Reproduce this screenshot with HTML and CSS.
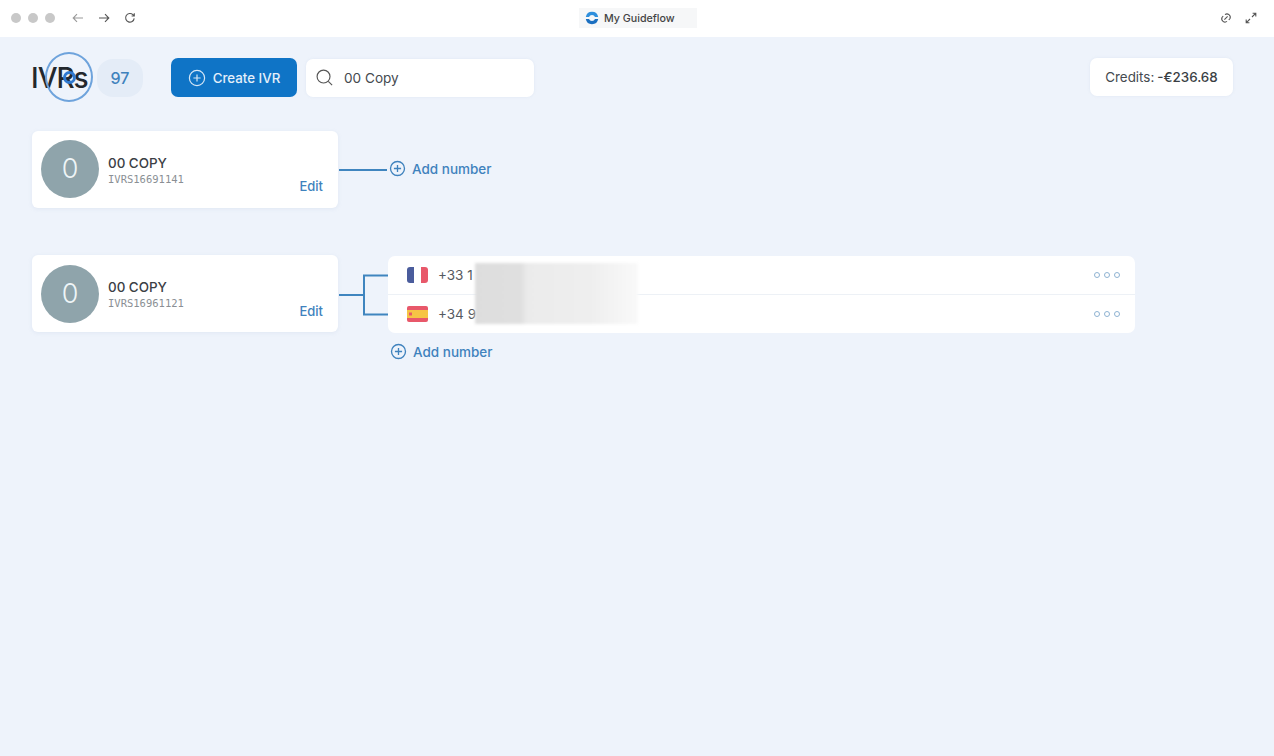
FILE: index.html
```html
<!DOCTYPE html>
<html lang="en">
<head>
  <meta charset="UTF-8">
  <title>My Guideflow</title>
  <link rel="stylesheet" href="styles.css">
</head>
<body>
  <!-- browser bar -->
  <div class="topbar">
    <div class="topbar-left">
      <span class="dot"></span><span class="dot"></span><span class="dot"></span>
      <svg class="nav-icon first" viewBox="0 0 12 12"><path d="M11 6H1.5M5 2.2 1.2 6 5 9.8" class="light"/></svg>
      <svg class="nav-icon" viewBox="0 0 12 12"><path d="M1 6h9.5M7 2.2 10.8 6 7 9.8"/></svg>
      <svg class="nav-icon" viewBox="0 0 12 12"><path d="M10.2 6.4A4.3 4.3 0 1 1 8.900 2.700L10.300 4M10.300 1.200V4H7.600"/></svg>
    </div>
    <div class="tab-title">
      <svg class="logo" viewBox="0 0 14 14"><path d="M.8 6A6.3 6.3 0 0 1 13.200 6H10A3.200 3.200 0 0 0 4 6Z" fill="#2f8fdc"/><path d="M.8 8A6.300 6.300 0 0 0 13.200 8H10A3.200 3.200 0 0 1 4 8Z" fill="#1b6fc0"/></svg>
      My Guideflow
    </div>
    <div class="topbar-right">
      <svg class="nav-icon" viewBox="0 0 12 12"><path d="M5 2.600A3.300 3.300 0 0 1 10 6.500L8.800 8M7 9.400A3.300 3.300 0 0 1 2 5.500L3.200 4M4.400 7.600l3.200-3.200"/></svg>
      <svg class="nav-icon" viewBox="0 0 12 12"><path d="M7 5l3.600-3.600M7.600 1.200h3.200v3.200M5 7l-3.600 3.600M1.200 7.600v3.200h3.200"/></svg>
    </div>
  </div>

  <div class="page">
    <div class="toolbar">
      <h1 class="title">IVRs</h1>
      <div class="count">97</div>
      <button class="create-btn">
        <svg class="plus-icon" viewBox="0 0 18 18"><circle cx="9" cy="9" r="7.600"/><path d="M9 5.400v7.200M5.400 9h7.200"/></svg>
        Create IVR
      </button>
      <div class="search">
        <svg class="search-icon" viewBox="0 0 20 20"><circle cx="9" cy="9" r="6.800"/><path d="m14 14 4 4"/></svg>
        00 Copy
      </div>
      <div class="credits">Credits: <b>-€236.68</b></div>
    </div>

    <div class="ivr-row first-row">
      <div class="ivr-card">
        <div class="avatar">0</div>
        <div class="ivr-text">
          <div class="ivr-name">00 COPY</div>
          <div class="ivr-code">IVRS16691141</div>
        </div>
        <a class="edit">Edit</a>
      </div>
      <div class="line"></div>
      <a class="add-number">
        <svg class="add-icon" viewBox="0 0 18 18"><circle cx="9" cy="9" r="7.400"/><path d="M9 5.200v7.600M5.200 9h7.600"/></svg>
        Add number
      </a>
    </div>

    <div class="ivr-row second-row">
      <div class="ivr-card">
        <div class="avatar">0</div>
        <div class="ivr-text">
          <div class="ivr-name">00 COPY</div>
          <div class="ivr-code">IVRS16961121</div>
        </div>
        <a class="edit">Edit</a>
      </div>
      <svg class="branch" viewBox="0 0 49 42"><path d="M0 21H24.500M49 1.500H25V40.500H49"/></svg>
      <div class="numbers">
        <div class="number-list">
          <div class="number-row">
            <svg class="flag" viewBox="0 0 21 16"><rect width="21" height="16" rx="3" fill="#fff"/><path d="M7 0H3a3 3 0 0 0-3 3v10a3 3 0 0 0 3 3h4Z" fill="#4a5c9c"/><path d="M14 0h4a3 3 0 0 1 3 3v10a3 3 0 0 1-3 3h-4Z" fill="#e8586a"/></svg>
            <span class="phone">+33 1</span>
            <span class="more"><i></i><i></i><i></i></span>
          </div>
          <div class="number-row">
            <svg class="flag" viewBox="0 0 21 16"><rect width="21" height="16" rx="2" fill="#e8586a"/><rect y="4" width="21" height="8" fill="#f6c445"/><rect x="2" y="6.500" width="3" height="3" fill="#e8586a"/></svg>
            <span class="phone">+34 9</span>
            <span class="more"><i></i><i></i><i></i></span>
          </div>
          <div class="redact"></div>
        </div>
        <a class="add-number under">
          <svg class="add-icon" viewBox="0 0 18 18"><circle cx="9" cy="9" r="7.400"/><path d="M9 5.200v7.600M5.200 9h7.600"/></svg>
          Add number
        </a>
      </div>
    </div>

    <!-- click marker from the recording -->
    <div class="click-ring"><span></span></div>
  </div>
</body>
</html>
```

FILE: styles.css
```css
body { margin: 0; font-family: 'Inter', sans-serif; background: #eef3fb; color: #33383d; height: 756px; overflow: hidden; }
a { display: block; }

.topbar { height: 37px; background: #fff; display: flex; align-items: center; justify-content: space-between; padding: 0 17px 1px 11px; box-sizing: border-box; position: relative; }
.topbar-left { display: flex; align-items: center; gap: 7px; }
.topbar-right { display: flex; align-items: center; gap: 6px; }
.dot { width: 10px; height: 10px; border-radius: 50%; background: #c8c8c8; }
.nav-icon { width: 12px; height: 12px; fill: none; stroke: #555; stroke-width: 1.1; margin-left: 7px; }
.nav-icon.first { margin-left: 10px; }
.nav-icon .light { stroke: #999; }
.tab-title { position: absolute; left: 579px; top: 8px; width: 118px; height: 20px; box-sizing: border-box; padding-left: 6px; background: #f6f7f8; display: flex; align-items: center; gap: 5px; font-size: 10.700px; font-weight: 500; color: #444; }
.logo { width: 14px; height: 14px; }

.page { position: relative; padding: 21px 41px 0 31px; }
.toolbar { display: flex; align-items: center; height: 39px; }
.title { margin: 0; font-size: 28px; font-weight: 500; color: #23282d; letter-spacing: -1px; width: 58px; white-space: nowrap; }
.count { width: 46px; height: 38px; margin-left: 8px; border-radius: 16px; background: #e4ecf7; color: #3f82bd; font-size: 16px; font-weight: 500; display: flex; align-items: center; justify-content: center; }
.create-btn { width: 126px; height: 39px; margin-left: 28px; border: none; border-radius: 7px; background: #0f74c6; color: #e4effa; font-family: inherit; font-size: 13.300px; font-weight: 500; display: flex; align-items: center; justify-content: center; gap: 7px; padding: 0; }
.plus-icon { width: 18px; height: 18px; fill: none; stroke: #d5e6f6; stroke-width: 1.200; }
.search { width: 228px; height: 38px; margin-left: 9px; background: #fff; border-radius: 7px; display: flex; align-items: center; gap: 10px; padding-left: 9px; box-sizing: border-box; font-size: 13.600px; color: #454a4f; box-shadow: 0 0 3px rgba(150, 170, 200, 0.15); }
.search-icon { width: 19px; height: 19px; fill: none; stroke: #555; stroke-width: 1.2; }
.credits { width: 143px; height: 38px; margin-left: auto; margin-top: -1px; background: #fff; border-radius: 7px; display: flex; align-items: center; justify-content: center; gap: 3px; font-size: 13.400px; color: #454a4f; white-space: nowrap; box-shadow: 0 0 3px rgba(150, 170, 200, 0.15); }
.credits b { font-weight: 500; color: #3a3f44; }

.ivr-row { display: flex; align-items: flex-start; }
.first-row { margin-top: 34px; align-items: center; }
.first-row .avatar { margin-bottom: 2px; }
.first-row .edit { bottom: 14px; }
.first-row .ivr-text { margin-top: 2px; }
.first-row .add-number { margin-bottom: 2px; }
.second-row { margin-top: 47px; }
.ivr-card { width: 306px; height: 77px; margin-left: 1px; background: #fff; border-radius: 6px; position: relative; display: flex; align-items: center; padding-left: 9px; box-sizing: border-box; flex: none; box-shadow: 0 1px 4px rgba(150, 170, 200, 0.15); }
.avatar { width: 58px; height: 58px; border-radius: 50%; background: #8fa4ab; color: #eef5f7; font-size: 27px; font-weight: 300; display: flex; align-items: center; justify-content: center; }
.ivr-text { margin-left: 9px; margin-top: 2px; }
.ivr-name { font-size: 13.400px; font-weight: 500; color: #3b4045; line-height: 16px; }
.ivr-code { font-family: 'DejaVu Sans Mono', monospace; font-size: 10.500px; color: #8a8f94; line-height: 14px; margin-top: 1px; }
.edit { position: absolute; right: 15px; bottom: 13px; font-size: 13px; font-weight: 500; color: #3f82bd; line-height: 16px; }

.line { width: 48px; height: 2px; background: #3f85bf; margin-left: 1px; margin-top: 1px; }
.add-number { display: flex; align-items: center; gap: 6px; font-size: 13.500px; font-weight: 500; color: #3f82bd; margin-left: 2px; white-space: nowrap; }
.add-icon { width: 17px; height: 17px; fill: none; stroke: #3f82bd; stroke-width: 1.400; }
.add-number.under { margin: 10px 0 0 2px; }

.branch { width: 49px; height: 42px; margin: 19px 0 0 1px; fill: none; stroke: #3f85bf; stroke-width: 2; flex: none; }
.numbers { flex: 1; }
.number-list { width: 747px; height: 77px; margin-top: 1px; background: #fff; border-radius: 7px; position: relative; overflow: hidden; }
.number-row { height: 38px; box-sizing: border-box; display: flex; align-items: center; padding: 0 15px 0 19px; font-size: 13.500px; color: #555a5f; }
.number-row + .number-row { border-top: 1px solid #edf1f6; height: 39px; }
.flag { width: 21px; height: 16px; flex: none; }
.phone { margin-left: 10px; }
.more { margin-left: auto; display: flex; gap: 4px; }
.more i { width: 4px; height: 4px; border: 1.500px solid #8fb3d2; border-radius: 50%; }
.redact { position: absolute; left: 87px; top: 7px; width: 163px; height: 61px; background: linear-gradient(to right, #dddddd 0, #dfdfdf 28%, #ebebeb 32%, #eeeeee 70%, #f9f9f9 100%); filter: blur(1.500px); }

.click-ring { position: absolute; left: 45px; top: 15px; width: 44px; height: 46px; border: 2px solid #6ea3dc; border-radius: 50%; display: flex; align-items: center; justify-content: center; }
.click-ring span { width: 7px; height: 7px; border: 3px solid #2f79d0; border-radius: 50%; }
```
